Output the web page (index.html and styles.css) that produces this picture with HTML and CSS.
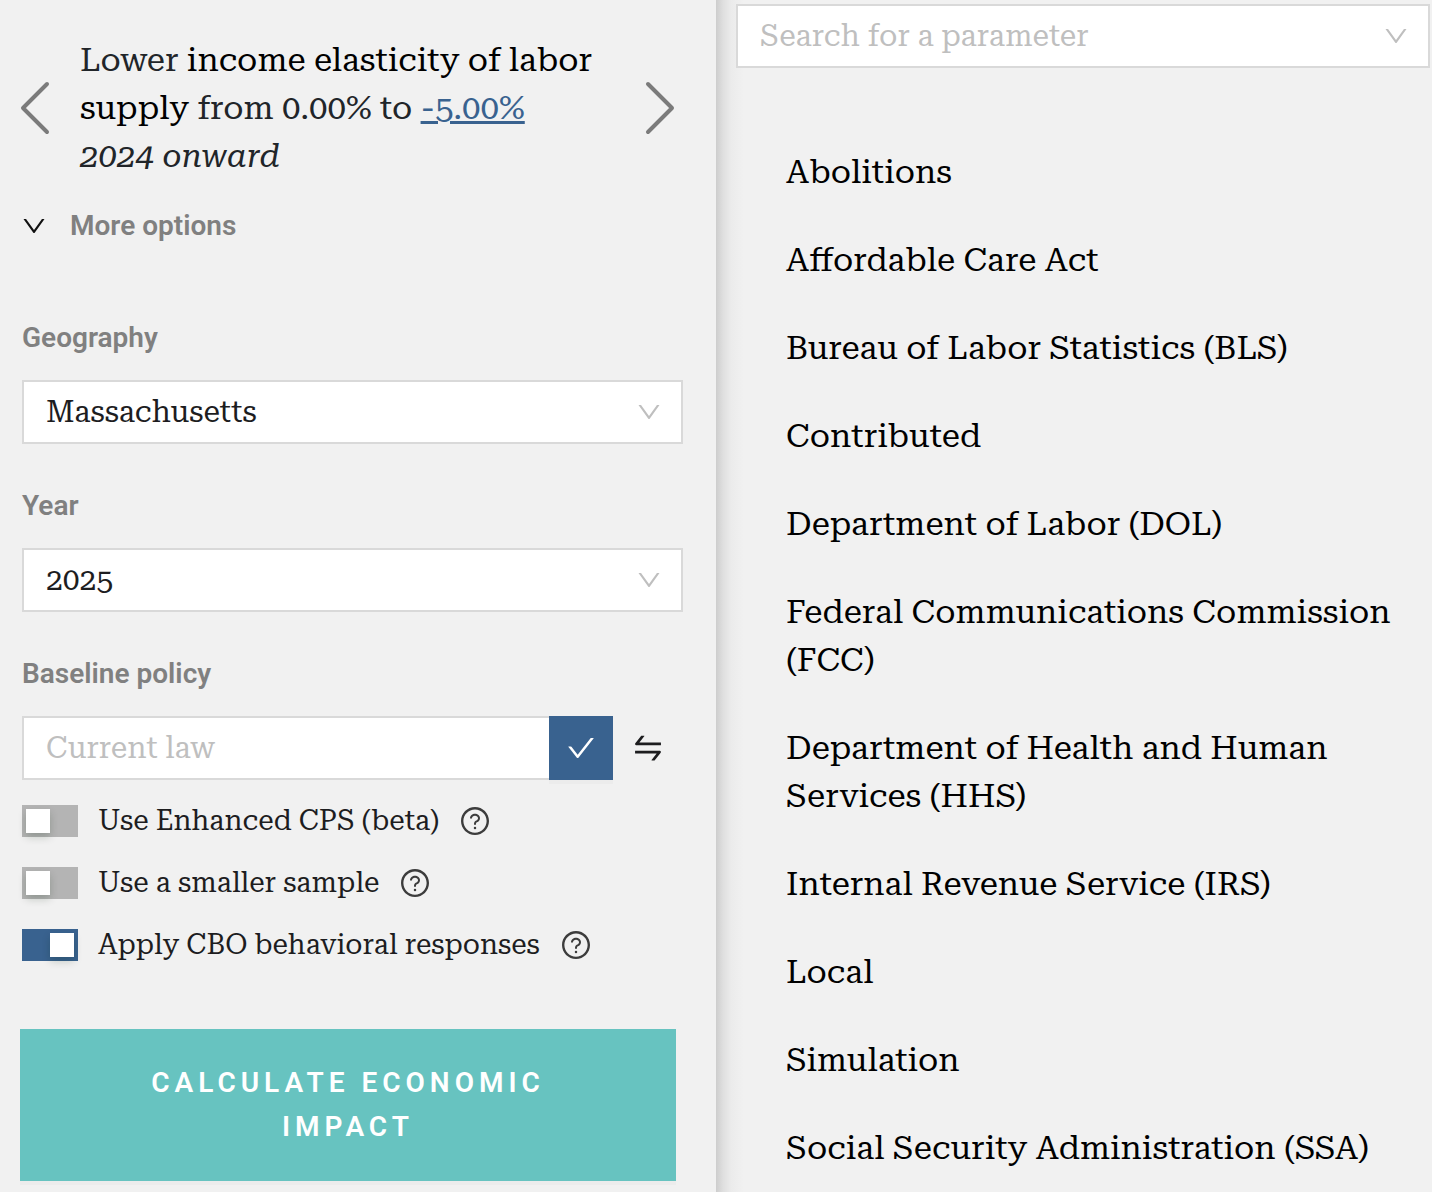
FILE: index.html
```html
<!DOCTYPE html>
<html lang="en">
<head>
<meta charset="utf-8">
<meta name="viewport" content="width=device-width, initial-scale=1">
<title>Policy editor</title>
<link rel="stylesheet" href="styles.css">
</head>
<body>
<svg class="sprite" aria-hidden="true">
  <symbol id="down" viewBox="0 0 1024 1024"><path d="M884 256h-75c-5.100 0-9.900 2.500-12.900 6.600L512 654.200 227.900 262.600c-3-4.100-7.800-6.600-12.900-6.600h-75c-6.500 0-10.300 7.400-6.500 12.700l352.600 486.100c12.800 17.600 39 17.600 51.700 0l352.600-486.100c3.900-5.300.1-12.700-6.400-12.700z"/></symbol>
  <symbol id="check" viewBox="0 0 1024 1024"><path d="M912 190h-69.900c-9.800 0-19.100 4.500-25.100 12.200L404.700 724.500 207 474a32 32 0 0 0-25.100-12.200H112c-6.700 0-10.400 7.700-6.300 12.900l273.900 347c12.800 16.200 37.400 16.200 50.300 0l488.400-618.900c4.100-5.100.4-12.800-6.300-12.800z"/></symbol>
  <symbol id="swap" viewBox="0 0 1024 1024"><path d="M847.900 592H152c-4.400 0-8 3.600-8 8v60c0 4.400 3.600 8 8 8h605.200L612.900 851c-4.100 5.200-.4 13 6.300 13h72.500c4.900 0 9.500-2.200 12.600-6.100l168.800-214.100c16.500-21 1.600-51.800-25.200-51.800zM872 356H266.800l144.300-183c4.100-5.200.4-13-6.300-13h-72.500c-4.900 0-9.500 2.200-12.600 6.100L150.900 380.200c-16.500 21-1.600 51.800 25.100 51.800h696c4.400 0 8-3.600 8-8v-60c0-4.400-3.600-8-8-8z"/></symbol>
  <symbol id="help" viewBox="0 0 1024 1024"><path d="M512 64C264.600 64 64 264.600 64 512s200.600 448 448 448 448-200.600 448-448S759.400 64 512 64zm0 820c-205.400 0-372-166.600-372-372s166.600-372 372-372 372 166.600 372 372-166.600 372-372 372z"/><path d="M623.600 316.700C593.600 290.400 554 276 512 276s-81.600 14.500-111.600 40.700C369.200 344 352 380.700 352 420v7.600c0 4.400 3.600 8 8 8h48c4.400 0 8-3.600 8-8V420c0-44.100 43.100-80 96-80s96 35.900 96 80c0 31.100-22 59.600-56.100 72.700-21.200 8.100-39.200 22.300-52.100 40.900-13.100 19-19.900 41.800-19.900 64.900V620c0 4.400 3.600 8 8 8h48c4.400 0 8-3.600 8-8v-22.700a48.300 48.300 0 0 1 30.900-44.800c59-22.700 97.100-74.700 97.100-132.500.1-39.300-17.100-76-48.300-103.300zM472 732a40 40 0 1 0 80 0 40 40 0 1 0-80 0z"/></symbol>
</svg>
<div class="layout">
  <main class="policy">
    <section class="reform">
      <button class="arrow" type="button" aria-label="Previous reform"><svg viewBox="0 0 32 56"><path d="M27 4 3 28l24 24"/></svg></button>
      <p class="summary">Lower <a class="parameter" href="#parameter">income elasticity of labor supply</a> from 0.00% to <a class="value" href="#value">-5.00%</a><br><em>2024 onward</em></p>
      <button class="arrow" type="button" aria-label="Next reform"><svg viewBox="0 0 32 56"><path d="m4 4 24 24L4 52"/></svg></button>
    </section>
    <button class="more" type="button" aria-expanded="true"><svg class="icon-sm"><use href="#down"/></svg>More options</button>
    <form class="options">
      <div class="field">
        <label class="label" for="geography">Geography</label>
        <div class="box"><select class="control" id="geography"><option>Massachusetts</option></select><svg class="icon-sm chevron"><use href="#down"/></svg></div>
      </div>
      <div class="field">
        <label class="label" for="year">Year</label>
        <div class="box"><select class="control" id="year"><option>2025</option></select><svg class="icon-sm chevron"><use href="#down"/></svg></div>
      </div>
      <div class="field">
        <label class="label" for="baseline">Baseline policy</label>
        <div class="baseline">
          <div class="box"><input class="control" id="baseline" type="text" placeholder="Current law"></div>
          <button class="confirm" type="button" aria-label="Confirm baseline"><svg class="icon-md"><use href="#check"/></svg></button>
          <button class="swap" type="button" aria-label="Swap baseline and reform"><svg class="icon-lg"><use href="#swap"/></svg></button>
        </div>
      </div>
      <div class="switches">
        <div class="toggle"><input class="switch" type="checkbox" id="cps"><label for="cps">Use Enhanced CPS (beta)</label><svg class="icon-md help"><use href="#help"/></svg></div>
        <div class="toggle"><input class="switch" type="checkbox" id="sample"><label for="sample">Use a smaller sample</label><svg class="icon-md help"><use href="#help"/></svg></div>
        <div class="toggle"><input class="switch" type="checkbox" id="cbo" checked><label for="cbo">Apply CBO behavioral responses</label><svg class="icon-md help"><use href="#help"/></svg></div>
      </div>
      <button class="calculate" type="button">Calculate economic impact</button>
    </form>
  </main>
  <aside class="parameters">
    <div class="box"><input class="control" type="text" aria-label="Search for a parameter" placeholder="Search for a parameter"><svg class="icon-sm chevron"><use href="#down"/></svg></div>
    <nav class="menu">
      <a href="#abolitions">Abolitions</a>
      <a href="#aca">Affordable Care Act</a>
      <a href="#bls">Bureau of Labor Statistics (BLS)</a>
      <a href="#contributed">Contributed</a>
      <a href="#dol">Department of Labor (DOL)</a>
      <a href="#fcc">Federal Communications Commission (FCC)</a>
      <a href="#hhs">Department of Health and Human Services (HHS)</a>
      <a href="#irs">Internal Revenue Service (IRS)</a>
      <a href="#local">Local</a>
      <a href="#simulation">Simulation</a>
      <a href="#ssa">Social Security Administration (SSA)</a>
    </nav>
  </aside>
</div>
</body>
</html>
```
FILE: styles.css
```css
:root {
  --serif: "Roboto Serif", "DejaVu Serif", serif;
  --sans: Roboto, sans-serif;
  --blue: #39628f;
  --line: #d9d9d9;
  --text: #1d1d1f;
  --muted: #bfbfbf;
}

* { box-sizing: border-box; }

body {
  margin: 0;
  background: #f1f1f1;
  color: var(--text);
  font: 28px/44px var(--serif);
}

button {
  padding: 0;
  border: 0;
  background: none;
  color: inherit;
  font: inherit;
  cursor: pointer;
}

svg { display: block; flex: none; fill: currentColor; }
.sprite { position: absolute; width: 0; height: 0; }
.icon-sm { width: 28px; height: 28px; }
.icon-md { width: 32px; height: 32px; }
.icon-lg { width: 36px; height: 36px; }

.layout {
  display: grid;
  grid-template-columns: 1fr 1fr;
  min-height: 100vh;
}

.policy { padding: 36px 40px 11px 20px; }

.reform {
  display: flex;
  align-items: center;
  gap: 28px;
}

.arrow svg {
  width: 32px;
  height: 56px;
  fill: none;
  stroke: #7b7b7b;
  stroke-width: 4;
  stroke-linecap: round;
  stroke-linejoin: round;
}

.summary {
  flex: 1;
  margin: 0;
  color: #212529;
  font-size: 33px;
  line-height: 48px;
}

.parameter { color: #000; text-decoration: none; }
.value { color: var(--blue); text-decoration-thickness: 3px; }

.more {
  display: flex;
  align-items: center;
  gap: 22px;
  margin-top: 24px;
}

.more,
.label {
  font: 600 28px/44px var(--sans);
}
.more { color: #808080; }
.more svg { color: #111; }
.label { color: #808080; }

.options {
  display: grid;
  gap: 40px;
  margin-top: 68px;
}

.field {
  display: grid;
  gap: 20px;
  padding-left: 2px;
  margin-right: -7px;
}

.box {
  display: flex;
  align-items: center;
  flex: 1;
  height: 64px;
  padding: 0 18px 0 22px;
  border: 2px solid var(--line);
  background: #fff;
}

.control {
  flex: 1;
  min-width: 0;
  padding: 0;
  border: 0;
  outline: 0;
  appearance: none;
  background: none;
  color: var(--text);
  font: 30px/44px var(--serif);
}
.control::placeholder { color: var(--muted); opacity: 1; }
.chevron { color: var(--muted); }

.baseline { display: flex; align-items: center; }
.baseline .box { border-right: 0; }

.confirm {
  display: grid;
  place-items: center;
  width: 64px;
  height: 64px;
  background: var(--blue);
  color: #fff;
  box-shadow: 0 4px 0 rgba(0, 0, 0, 0.02);
}

.swap { padding: 0 17px; }

.switches {
  display: grid;
  gap: 18px;
  margin-top: -21px;
  padding-left: 2px;
}

.toggle {
  display: flex;
  align-items: center;
  gap: 20px;
}

.switch {
  display: flex;
  align-items: center;
  width: 56px;
  height: 32px;
  margin: 0;
  padding: 0 4px;
  appearance: none;
  background: #b4b4b4;
}
.switch::before {
  content: "";
  width: 24px;
  height: 24px;
  background: #fff;
  box-shadow: 0 4px 8px rgba(0, 35, 11, 0.2);
}
.switch:checked { justify-content: flex-end; background: var(--blue); }
.help { color: #3c3c3c; }

.calculate {
  margin-top: 22px;
  padding: 32px 80px;
  background: #67c3c0;
  box-shadow: 0 4px 0 rgba(0, 0, 0, 0.02);
  color: #fff;
  font: 600 28px/44px var(--sans);
  letter-spacing: 5px;
  text-transform: uppercase;
}

.parameters {
  padding: 4px 2px 0 20px;
  background: linear-gradient(to right, #cdcdcd, #dfdfdf 7px, #ebebeb 15px, #f1f1f1 28px);
}

.menu {
  display: grid;
  gap: 40px;
  padding: 80px 30px 20px 50px;
}
.menu a {
  color: #000;
  font-size: 33px;
  line-height: 48px;
  text-decoration: none;
}
```
